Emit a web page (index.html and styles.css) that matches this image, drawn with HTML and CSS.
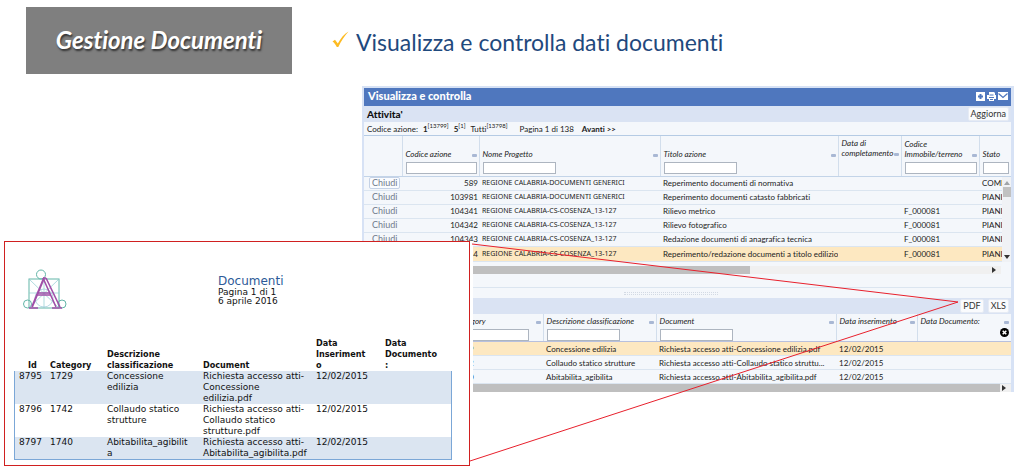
FILE: index.html
```
<!DOCTYPE html>
<html lang="it">
<head>
<meta charset="utf-8">
<title>Gestione Documenti</title>
<link rel="stylesheet" href="styles.css">
</head>
<body>
<div class="slide">
  <header class="top">
    <h1 class="banner">Gestione Documenti</h1>
    <h2 class="subtitle">
      <svg class="check" viewBox="0 0 17 17"><path d="M0.500 10.500L3 8.800L5.800 12.600C8.500 7.500 12 3 16.500 0.500C12.500 5 9 10 6.300 16H4.800C3.800 13.800 2.300 11.800 0.500 10.500Z" fill="#fdbb22"/></svg>
      Visualizza e controlla dati documenti
    </h2>
  </header>

  <main class="window">
    <div class="titlebar">
      <span>Visualizza e controlla</span>
      <svg class="title-icons" viewBox="0 0 32 9">
        <rect x="0" y="0" width="9" height="9" fill="#fff"/><path d="M4.500 2v5M2 4.500h5" stroke="#4f77be" stroke-width="2"/>
        <path d="M13 3V0h5l1 1v2M11 3h9v4h-2V5h-5v2h-2zM13 6h5v3h-5z" fill="#fff"/><path d="M13.500 3h4M14 7.500h3" stroke="#4f77be"/>
        <rect x="22" y="0" width="10" height="8" fill="#fff"/><path d="M22.500 1.500L27 5.500L31.500 1.500" fill="none" stroke="#4f77be" stroke-width="1.200"/>
      </svg>
    </div>
    <div class="toolbar">
      <h3 class="section">Attivita'</h3>
      <button class="btn" type="button">Aggiorna</button>
    </div>
    <nav class="pager">
      <span>Codice azione:</span>
      <span><b>1</b><sup>[13799]</sup></span>
      <span><b>5</b><sup>[1]</sup></span>
      <span>Tutti<sup>[13798]</sup></span>
      <span class="page">Pagina 1 di 138</span>
      <b>Avanti &gt;&gt;</b>
    </nav>
    <div class="grid-wrap">
      <table class="grid">
        <colgroup><col class="c-act"><col class="c-code"><col class="c-name"><col class="c-title"><col class="c-date"><col class="c-bld"><col></colgroup>
        <thead>
          <tr>
            <th></th>
            <th><label class="cap" for="f1">Codice azione</label><input class="filter" id="f1"></th>
            <th><label class="cap" for="f2">Nome Progetto</label><input class="filter" id="f2"></th>
            <th><label class="cap" for="f3">Titolo azione</label><input class="filter" id="f3"></th>
            <th class="up"><span class="cap">Data di completamento</span></th>
            <th><label class="cap" for="f4">Codice Immobile/terreno</label><input class="filter" id="f4"></th>
            <th class="last"><label class="cap" for="f5">Stato</label><input class="filter" id="f5"></th>
          </tr>
        </thead>
        <tbody>
          <tr><td><button class="close boxed" type="button">Chiudi</button></td><td class="num">589</td><td class="project">REGIONE CALABRIA-DOCUMENTI GENERICI</td><td>Reperimento documenti di normativa</td><td></td><td></td><td class="state">COMP</td></tr>
          <tr><td><button class="close" type="button">Chiudi</button></td><td class="num">103981</td><td class="project">REGIONE CALABRIA-DOCUMENTI GENERICI</td><td>Reperimento documenti catasto fabbricati</td><td></td><td></td><td class="state">PIANI</td></tr>
          <tr><td><button class="close" type="button">Chiudi</button></td><td class="num">104341</td><td class="project">REGIONE CALABRIA-CS-COSENZA_13-127</td><td>Rilievo metrico</td><td></td><td>F_000081</td><td class="state">PIANI</td></tr>
          <tr><td><button class="close" type="button">Chiudi</button></td><td class="num">104342</td><td class="project">REGIONE CALABRIA-CS-COSENZA_13-127</td><td>Rilievo fotografico</td><td></td><td>F_000081</td><td class="state">PIANI</td></tr>
          <tr><td><button class="close" type="button">Chiudi</button></td><td class="num">104343</td><td class="project">REGIONE CALABRIA-CS-COSENZA_13-127</td><td>Redazione documenti di anagrafica tecnica</td><td></td><td>F_000081</td><td class="state">PIANI</td></tr>
          <tr class="sel"><td><button class="close" type="button">Chiudi</button></td><td class="num">104344</td><td class="project">REGIONE CALABRIA-CS-COSENZA_13-127</td><td>Reperimento/redazione documenti a titolo edilizio</td><td></td><td>F_000081</td><td class="state">PIANI</td></tr>
        </tbody>
      </table>
      <div class="vscroll">
        <svg class="tri" viewBox="0 0 6 4"><path d="M0 4L3 0L6 4Z" fill="#a0a4a8"/></svg>
        <span class="vthumb"></span>
        <svg class="tri" viewBox="0 0 6 4"><path d="M0 0L3 4L6 0Z" fill="#333"/></svg>
      </div>
    </div>
    <div class="hscroll">
      <span class="hthumb"></span>
      <svg class="arrow" viewBox="0 0 4 6"><path d="M0 0L4 3L0 6Z" fill="#333"/></svg>
    </div>
    <div class="gap"></div>
    <div class="splitter"><span class="dots"></span></div>
    <div class="toolbar right">
      <button class="btn" type="button">PDF</button>
      <button class="btn" type="button">XLS</button>
    </div>
    <table class="grid docs">
      <colgroup><col class="d-id"><col class="d-cat"><col class="d-desc"><col class="d-doc"><col class="d-ins"><col></colgroup>
      <thead>
        <tr>
          <th></th>
          <th><label class="cap" for="g1">Category</label><input class="filter" id="g1"></th>
          <th><label class="cap" for="g2">Descrizione classificazione</label><input class="filter" id="g2"></th>
          <th><label class="cap" for="g3">Document</label><input class="filter" id="g3"></th>
          <th><span class="cap">Data inserimento</span></th>
          <th><span class="cap">Data Documento:</span><svg class="clear" viewBox="0 0 9 9"><circle cx="4.500" cy="4.500" r="4.500" fill="#000"/><path d="M2.700 2.700l3.600 3.600M6.300 2.700L2.700 6.300" stroke="#fff" stroke-width="1.500"/></svg></th>
        </tr>
      </thead>
      <tbody>
        <tr class="sel"><td>8795</td><td>1729</td><td>Concessione edilizia</td><td>Richiesta accesso atti-Concessione edilizia.pdf</td><td>12/02/2015</td><td></td></tr>
        <tr><td>8796</td><td>1742</td><td>Collaudo statico strutture</td><td>Richiesta accesso atti-Collaudo statico struttu...</td><td>12/02/2015</td><td></td></tr>
        <tr><td>8797</td><td>1740</td><td>Abitabilita_agibilita</td><td>Richiesta accesso atti-Abitabilita_agibilita.pdf</td><td>12/02/2015</td><td></td></tr>
      </tbody>
    </table>
    <div class="hscroll full">
      <span class="hthumb"></span>
      <svg class="arrow" viewBox="0 0 4 6"><path d="M0 0L4 3L0 6Z" fill="#333"/></svg>
    </div>
  </main>

  <section class="report">
    <div class="report-head">
      <svg class="logo" viewBox="0 0 44 42">
        <g fill="none" stroke="#63b5a8" stroke-width="1"><rect x="6" y="10" width="30" height="29"/><circle cx="18" cy="5.500" r="4.500"/><circle cx="4.500" cy="35" r="4"/><circle cx="39" cy="35" r="4"/><path d="M6 10L36 39M36 10L6 39M21 10V39M6 24H36" stroke="#8ccbd0" stroke-width=".7"/><circle cx="21" cy="29" r="9" stroke="#9bc9d8" stroke-width=".7"/></g>
        <g fill="none" stroke="#a04fa8"><path d="M9 38L21 9" stroke-width="2"/><path d="M20 9L33 38M23 9L37 38" stroke-width="1.600"/><path d="M20 9h3M13 26h15M14 24h13M6 39h9M29 39h10" stroke-width="1.500"/></g>
      </svg>
      <div>
        <h3 class="report-title">Documenti</h3>
        <p class="meta">Pagina 1 di 1</p>
        <p class="meta">6 aprile 2016</p>
      </div>
    </div>
    <table class="print">
      <colgroup><col class="p-id"><col class="p-cat"><col class="p-desc"><col class="p-doc"><col class="p-ins"><col></colgroup>
      <thead><tr><th class="mid">Id</th><th>Category</th><th>Descrizione classificazione</th><th>Document</th><th>Data Inseriment<br>o</th><th>Data Documento<br>:</th></tr></thead>
      <tbody>
        <tr><td>8795</td><td>1729</td><td>Concessione<br>edilizia</td><td>Richiesta accesso atti-<br>Concessione<br>edilizia.pdf</td><td>12/02/2015</td><td></td></tr>
        <tr><td>8796</td><td>1742</td><td>Collaudo statico<br>strutture</td><td>Richiesta accesso atti-<br>Collaudo statico<br>strutture.pdf</td><td>12/02/2015</td><td></td></tr>
        <tr><td>8797</td><td>1740</td><td>Abitabilita_agibilit<br>a</td><td>Richiesta accesso atti-<br>Abitabilita_agibilita.pdf</td><td>12/02/2015</td><td></td></tr>
      </tbody>
    </table>
  </section>

  <svg class="leader" viewBox="0 0 490 222"><path d="M2 3L488 61M488 61L0 220" fill="none" stroke="#e8202c" stroke-width="1"/></svg>
</div>
</body>
</html>
```
FILE: styles.css
```
* { box-sizing: border-box; }
body { margin: 0; background: #fff; color: #222; font-family: Lato, sans-serif; font-size: 8px; line-height: 10px; font-variant-ligatures: none; }
h1, h2, h3, p { margin: 0; }
table { border-collapse: collapse; table-layout: fixed; width: 100%; }
button { font-family: inherit; cursor: pointer; }
.slide { position: relative; padding: 7px 9px 77px 0; }

.top { display: flex; align-items: center; gap: 40px; padding-left: 26px; }
.banner { width: 266px; padding: 18px 0 19px; background: #7f7f7f; color: #fff; text-align: center; font-size: 24px; line-height: 30px; font-style: italic; font-weight: 700; text-shadow: 1px 2px 2px #333; white-space: nowrap; }
.subtitle { display: flex; align-items: center; gap: 7px; padding-top: 3px; color: #1f497d; font-size: 23px; line-height: 30px; font-weight: 400; white-space: nowrap; }
.check { width: 17px; height: 17px; margin-bottom: 6px; }

.window { margin: 12px 0 0 362px; border: solid #d7e2f5; border-width: 2px 3px 0 2px; background: #f4f7fb; }
.titlebar { display: flex; align-items: center; justify-content: space-between; height: 18px; padding: 0 3px 2px 4px; background: #4f77be; color: #fff; font-size: 11px; font-weight: 900; }
.title-icons { width: 32px; height: 9px; }
.toolbar { display: flex; align-items: center; justify-content: space-between; height: 16px; padding: 0 2px 0 3px; background: #dae3f3; }
.toolbar.right { justify-content: flex-end; gap: 4px; }
.section { font-size: 10px; font-weight: 900; color: #111; }
.btn { height: 14px; padding: 0 2px; border: 1px solid #e6ebf4; border-radius: 2px; background: #fafbfd; color: #333; font-size: 9px; line-height: 10px; }
.pager { display: flex; gap: 5px; height: 14px; padding: 1px 3px; border-bottom: 1px solid #b5cbe4; line-height: 12px; white-space: nowrap; }
.pager sup { font-size: 6px; line-height: 5px; }
.pager .page { margin: 0 3px 0 7px; }

.grid-wrap { position: relative; }
.grid th { height: 40px; padding: 0 2px 2px 3px; vertical-align: bottom; text-align: left; font-weight: 400; font-style: italic; border-right: 1px solid #d2deec; border-bottom: 1px solid #c3d4e8; }
.grid .up { vertical-align: top; padding-top: 2px; }
.grid th:last-child { border-right: 0; }
.cap { display: flex; align-items: flex-end; justify-content: space-between; min-height: 10px; }
.cap::after { content: ""; flex: none; width: 5px; height: 3px; margin-bottom: 2px; border-radius: 1px; background: #a9b8d4; }
.last .cap::after { display: none; }
.filter { display: block; width: 73px; max-width: 100%; height: 12px; margin-top: 3px; padding: 0; border: 1px solid #adb5c0; background: #fff; font-size: 8px; }
.last { overflow: hidden; }
.grid td { height: 14px; padding: 0 2px 0 3px; border-bottom: 1px solid #dbe5f0; white-space: nowrap; overflow: hidden; line-height: 10px; }
.grid td.num { text-align: right; padding-right: 1px; }
.grid td.project { font-family: "Noto Sans", sans-serif; font-size: 7px; }
.grid td.state { padding-right: 0; }
.grid .sel td { background: #fde8c1; }
.grid tr.sel td { height: 15px; }
.close { display: block; height: 12px; margin-left: 2px; padding: 0 2px; border: 1px solid transparent; border-radius: 2px; background: none; color: #707b8c; font-size: 9px; line-height: 10px; }
.close.boxed { border-color: #c5d2e6; background: #fafcff; }
.c-act { width: 38px; } .c-code { width: 77px; } .c-name { width: 181px; } .c-title { width: 178px; } .c-date { width: 63px; } .c-bld { width: 78px; }

.vscroll { position: absolute; right: 0; bottom: 0; width: 9px; height: 85px; display: flex; flex-direction: column; align-items: center; padding: 4px 0 3px; background: #f0f2f5; }
.tri { width: 6px; height: 4px; }
.vthumb { width: 8px; height: 10px; margin: 2px 0 auto; background: #c1c1c1; }
.hscroll { display: flex; align-items: center; justify-content: space-between; height: 8px; margin: 4px 10px 0 0; padding-right: 5px; background: #f0f0f0; }
.hthumb { width: 61%; height: 8px; background: #bfbfbf; }
.arrow { width: 4px; height: 6px; }
.gap { height: 14px; border-bottom: 1px solid #dbe5f0; }
.splitter { display: flex; justify-content: center; height: 10px; padding: 4px 34px 0 0; }
.dots { width: 94px; height: 3px; border: dotted #d3dae4; border-width: 1px 0; }

.docs th { height: 28px; border-bottom: 1px solid #b8c0dd; padding-bottom: 0; }
.docs th:nth-child(n+5) { vertical-align: top; padding-top: 2px; }
.docs tbody td, .docs tbody tr.sel td { height: 14px; }
.clear { display: block; width: 9px; height: 9px; margin: 2px 0 0 auto; }
.d-id { width: 88px; } .d-cat { width: 91px; } .d-desc { width: 113px; } .d-doc { width: 180px; } .d-ins { width: 81px; }
.hscroll.full { margin: 0; }
.full .hthumb { width: 99%; }

.report { position: absolute; left: 4px; top: 241px; width: 466px; padding: 27px 17px 5px 9px; border: 1px solid #d02020; background: #fff; box-shadow: 3px 0 0 #fff; color: #111; font-family: "DejaVu Sans", sans-serif; font-size: 9px; line-height: 11px; }
.report-head { display: flex; gap: 151px; padding: 0 0 27px 9px; }
.logo { width: 44px; height: 42px; }
.report-title { margin-top: 5px; color: #2d5a98; font-size: 12px; line-height: 14px; font-weight: 400; }
.meta { line-height: 9px; }
.print { border-collapse: separate; border-spacing: 0; }
.print th { padding: 0 0 0 4px; text-align: left; vertical-align: bottom; font-family: "DejaVu Sans Condensed", "DejaVu Sans", sans-serif; }
.print th.mid { padding-left: 14px; }
.print td { padding: 0 0 0 4px; vertical-align: top; white-space: nowrap; }
.print tbody tr:nth-child(odd) td { background: #dbe5f1; }
.print td:first-child { border-left: 1px solid #7ba7d7; }
.print td:last-child { border-right: 1px solid #7ba7d7; }
.print tbody tr:last-child td { border-bottom: 1px solid #7ba7d7; }
.p-id { width: 32px; } .p-cat { width: 57px; } .p-desc { width: 96px; } .p-doc { width: 113px; } .p-ins { width: 69px; }

.leader { position: absolute; left: 470px; top: 241px; width: 490px; height: 222px; }
```
